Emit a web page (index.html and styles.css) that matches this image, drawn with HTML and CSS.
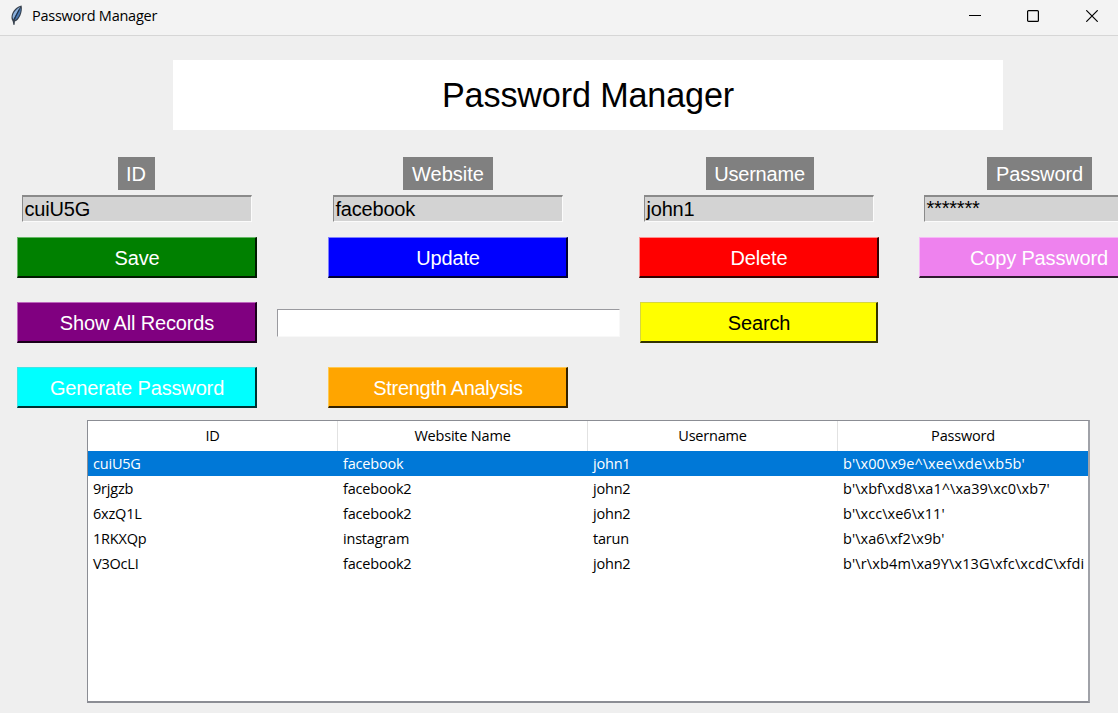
FILE: index.html
```html
<!DOCTYPE html>
<html lang="en">
<head>
<meta charset="utf-8">
<title>Password Manager</title>
<link rel="stylesheet" href="styles.css">
</head>
<body>
<header class="titlebar">
  <svg class="feather" width="14" height="22" viewBox="0 0 14 22">
    <path d="M11.600 .4C7 1.200 2.500 5.500 1.600 11c-.3 2 0 3.800 1 5l.9 4 1.100-.2.3-3.200C9.300 15 13 7 11.600.4z" fill="#36404d"/>
    <path d="M10.300 1.800C6 4 3 8 2.600 12l.6 2.500L8.300 5z" fill="#8bb0dc"/>
    <path d="M10.800 2.800C11 8 8.600 13 5 15.300L5.600 12z" fill="#4877b0"/>
    <path d="M9.300 4.500L4.500 14" stroke="#17304f" stroke-width="1"/>
  </svg>
  <span class="caption">Password Manager</span>
  <div class="controls">
    <svg width="12" height="12" viewBox="0 0 12 12"><path d="M0 5.500h12" stroke="#000"/></svg>
    <svg width="12" height="12" viewBox="0 0 12 12"><rect x=".6" y=".6" width="10.800" height="10.800" rx="1" fill="none" stroke="#000" stroke-width="1.200"/></svg>
    <svg width="12" height="12" viewBox="0 0 12 12"><path d="M.3.3l11.400 11.400M11.700.3L.3 11.700" stroke="#000" stroke-width="1.200"/></svg>
  </div>
</header>
<main class="window">
  <h1 class="heading"><span>Password Manager</span></h1>
  <section class="form">
    <div class="field"><label class="tag tag-id">ID</label><div class="entry">cuiU5G</div><button class="btn green">Save</button></div>
    <div class="field"><label class="tag tag-site">Website</label><div class="entry">facebook</div><button class="btn blue">Update</button></div>
    <div class="field"><label class="tag tag-user">Username</label><div class="entry">john1</div><button class="btn red">Delete</button></div>
    <div class="field"><label class="tag tag-pass">Password</label><div class="entry masked">*******</div><button class="btn violet">Copy Password</button></div>
  </section>
  <section class="actions">
    <button class="btn purple">Show All Records</button>
    <div class="query"></div>
    <button class="btn yellow">Search</button>
  </section>
  <section class="actions tools">
    <button class="btn cyan">Generate Password</button>
    <button class="btn orange">Strength Analysis</button>
  </section>
  <section class="tree">
    <div class="row head"><span>ID</span><span>Website Name</span><span>Username</span><span>Password</span></div>
    <div class="row selected"><span>cuiU5G</span><span>facebook</span><span>john1</span><span class="cipher">b'\x00\x9e^\xee\xde\xb5b'</span></div>
    <div class="row"><span>9rjgzb</span><span>facebook2</span><span>john2</span><span class="cipher">b'\xbf\xd8\xa1^\xa39\xc0\xb7'</span></div>
    <div class="row"><span>6xzQ1L</span><span>facebook2</span><span>john2</span><span class="cipher">b'\xcc\xe6\x11'</span></div>
    <div class="row"><span>1RKXQp</span><span>instagram</span><span>tarun</span><span class="cipher">b'\xa6\xf2\x9b'</span></div>
    <div class="row"><span>V3OcLI</span><span>facebook2</span><span>john2</span><span class="cipher long">b'\r\xb4m\xa9Y\x13G\xfc\xcdC\xfdi</span></div>
  </section>
</main>
</body>
</html>
```
FILE: styles.css
```css
* { box-sizing: border-box; }
body {
  margin: 0;
  width: 1118px;
  height: 713px;
  overflow: hidden;
  background: #efefef;
  font: 20px/24px "Liberation Sans", Arial, sans-serif;
  color: #000;
}
.titlebar {
  display: flex;
  height: 36px;
  background: #f3f3f3;
  border-bottom: 1px solid #d6d6d6;
  padding: 0 20px 0 10px;
}
.feather { margin-top: 5px; }
.caption {
  margin-left: 8px;
  font: 14.5px/31px "Open Sans", "Noto Sans", sans-serif;
  letter-spacing: -0.25px;
}
.controls { display: flex; gap: 47px; margin: 10px 0 0 auto; }
.controls svg:first-child { margin-right: -1px; }
.heading {
  width: 830px;
  height: 70px;
  margin: 24px 0 0 173px;
  background: #fff;
  font-size: 34.200px;
  font-weight: 400;
  letter-spacing: -0.15px;
  line-height: 71px;
  text-align: center;
}
.form {
  display: grid;
  grid-template-columns: 240px 240px 240px 240px;
  column-gap: 71px;
  margin: 27px 0 0 17px;
}
.field:last-child { margin-left: -31px; width: 240px; }
.field { display: flex; flex-direction: column; align-items: center; }
.tag {
  height: 33px;
  line-height: 34px;
  background: #808080;
  color: #fff;
  text-align: center;
}
.tag-id { width: 37px; margin-right: 2px; }
.tag-site { width: 90px; }
.tag-user { width: 108px; margin-left: 1px; letter-spacing: -0.2px; }
.tag-pass { width: 105px; padding-left: 1px; letter-spacing: -0.1px; }
.entry {
  width: 230px;
  height: 27px;
  margin: 5px 1px 15px 0;
  padding-left: 2px;
  line-height: 25px;
  letter-spacing: -0.2px;
  background: #d3d3d3;
  border: 1px solid;
  border-width: 2px 1px 1px 1px;
  border-color: #8a8a8a #fbfbfb #fbfbfb #8a8a8a;
}
.masked { line-height: 23px; letter-spacing: -0.2px; }
.btn {
  width: 240px;
  height: 41px;
  padding: 2px 0 0 1px;
  border: 1px solid;
  border-width: 1px 2px 2px 1px;
  font: inherit;
  letter-spacing: -0.15px;
  color: #fff;
  white-space: nowrap;
}
.green { background: #008000; border-color: #67b967 #001a00 #001a00 #67b967; }
.blue { background: #0000ff; border-color: #8080ff #000033 #000033 #8080ff; }
.red { background: #ff0000; border-color: #ff8f8f #330000 #330000 #ff8f8f; }
.violet { background: #ee82ee; border-color: #f7b8f7 #301a30 #301a30 #f7b8f7; }
.purple { background: #800080; border-color: #bd66bd #1a001a #1a001a #bd66bd; }
.yellow { background: #ffff00; border-color: #d6d640 #333300 #333300 #d6d640; color: #000; width: 238px; }
.cyan { background: #00ffff; border-color: #40e6e6 #003333 #003333 #40e6e6; }
.orange { background: #ffa500; border-color: #ffc94f #332100 #332100 #ffc94f; letter-spacing: -0.3px; }
.actions { display: flex; align-items: center; margin: 24px 0 0 17px; }
.query {
  width: 343px;
  height: 28px;
  margin: 0 20px;
  background: #fff;
  border: 1px solid #9a9a9f;
  border-right-color: #f8f8f8;
  border-bottom-color: #f8f8f8;
}
.tools { gap: 71px; }
.tree {
  width: 1003px;
  height: 283px;
  margin: 12px 0 0 87px;
  background: #fff;
  border: 1px solid #8b8d94;
  border-right-color: #a0a2a8;
  border-right-width: 2px;
  border-bottom-width: 2px;
  overflow: hidden;
  font: 14.500px/25px "Open Sans", "Noto Sans", sans-serif;
  letter-spacing: -0.2px;
}
.row { display: grid; grid-template-columns: 250px 250px 250px 250px; height: 25px; }
.row span { padding-left: 5px; white-space: nowrap; overflow: hidden; }
.row .cipher { letter-spacing: 0.05px; }
.row .long { letter-spacing: 0.13px; }
.row.head { height: 30px; line-height: 30px; text-align: center; }
.row.head span { padding: 0; border-right: 1px solid #e2e2e2; }
.row.head span:last-child { border-right: 0; }
.selected { background: #0078d7; color: #fff; }
```
